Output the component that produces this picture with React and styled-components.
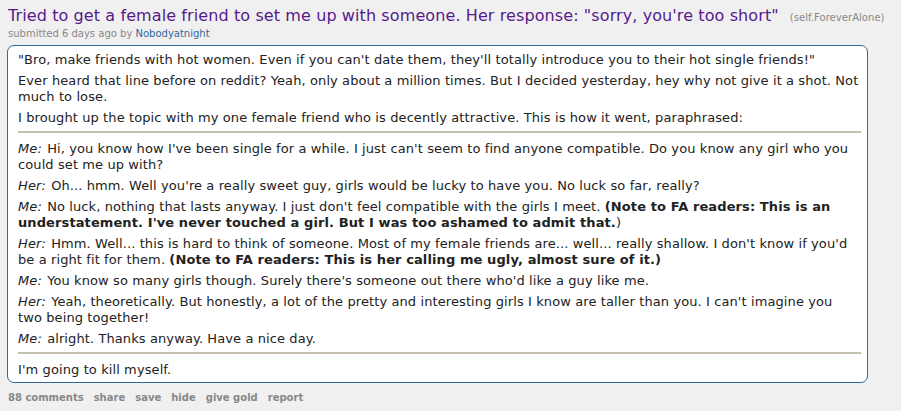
import React from "react";
import styled, { createGlobalStyle } from "styled-components";

const GlobalStyle = createGlobalStyle`
  html, body {
    margin: 0;
    padding: 0;
    background-color: #f0f0f0;
  }
  body {
    font-family: "DejaVu Sans", Verdana, sans-serif;
  }
`;

const Entry = styled.div`
  padding: 6px 4px 0 7px;
`;

const TitleRow = styled.p`
  margin: 0;
  line-height: 20px;
  padding-left: 1px;
  white-space: nowrap;
`;

const Title = styled.a`
  color: #551a8b;
  font-size: 16px;
  letter-spacing: 0.1px;
  text-decoration: none;
`;

const Domain = styled.span`
  color: #888;
  font-size: 10px;
  letter-spacing: 0.05px;
  margin-left: 11px;
`;

const Tagline = styled.p`
  margin: 0;
  padding-left: 1px;
  font-size: 10px;
  line-height: 12px;
  color: #888;
`;

const Author = styled.a`
  color: #369;
  text-decoration: none;
`;

const UserText = styled.div`
  margin: 5px 29px 0 0;
  background-color: #fff;
  border: 1px solid #369;
  border-radius: 7px;
  padding: 1px 6px 0 10px;
  color: #222;
  font-size: 13px;
  letter-spacing: 0.1px;
  line-height: 16px;

  & > p:last-child {
    margin-bottom: 4px;
  }
`;

const Para = styled.p`
  margin: 5px 0;
`;

const Rule = styled.hr`
  border: none;
  height: 2px;
  background-color: #c5c1ad;
  margin: 5px 0 8px;
`;

const Speaker = styled.em`
  font-style: italic;
  margin-right: 1px;
`;

const Note = styled.strong`
  font-weight: bold;
`;

const Buttons = styled.ul`
  list-style: none;
  display: flex;
  gap: 10px;
  margin: 8px 0 0;
  padding: 0 0 0 1px;
`;

const ButtonLink = styled.li`
  color: #888;
  font-size: 10px;
  font-weight: bold;
  line-height: 14px;
`;

const lines = [
  ["Me", "Hi, you know how I've been single for a while. I just can't seem to find anyone compatible. Do you know any girl who you could set me up with?"],
  ["Her", "Oh... hmm. Well you're a really sweet guy, girls would be lucky to have you. No luck so far, really?"],
  ["Me", "No luck, nothing that lasts anyway. I just don't feel compatible with the girls I meet. ", "(Note to FA readers: This is an understatement. I've never touched a girl. But I was too ashamed to admit that.", ")"],
  ["Her", "Hmm. Well... this is hard to think of someone. Most of my female friends are... well... really shallow. I don't know if you'd be a right fit for them. ", "(Note to FA readers: This is her calling me ugly, almost sure of it.)"],
  ["Me", "You know so many girls though. Surely there's someone out there who'd like a guy like me."],
  ["Her", <>Yeah, theoretically. But honestly, a lot of the pretty and interesting girls I know are taller than you. I can't imagine you<br />two being together!</>],
  ["Me", "alright. Thanks anyway. Have a nice day."],
];

const buttons = ["88 comments", "share", "save", "hide", "give gold", "report"];

const App = () => {
  return (
    <>
      <GlobalStyle />
      <Entry>
        <TitleRow>
          <Title href="#">
            Tried to get a female friend to set me up with someone. Her response: "sorry, you're too short"
          </Title>
          <Domain>(self.ForeverAlone)</Domain>
        </TitleRow>
        <Tagline>
          submitted 6 days ago by <Author href="#">Nobodyatnight</Author>
        </Tagline>
        <UserText>
          <Para>"Bro, make friends with hot women. Even if you can't date them, they'll totally introduce you to their hot single friends!"</Para>
          <Para>Ever heard that line before on reddit? Yeah, only about a million times. But I decided yesterday, hey why not give it a shot. Not much to lose.</Para>
          <Para>I brought up the topic with my one female friend who is decently attractive. This is how it went, paraphrased:</Para>
          <Rule />
          {lines.map(([who, text, note, tail], i) => (
            <Para key={i}>
              <Speaker>{who}:</Speaker> {text}
              {note && <Note>{note}</Note>}
              {tail}
            </Para>
          ))}
          <Rule />
          <Para>I'm going to kill myself.</Para>
        </UserText>
        <Buttons>
          {buttons.map((b) => (
            <ButtonLink key={b}>{b}</ButtonLink>
          ))}
        </Buttons>
      </Entry>
    </>
  );
};

export default App;
